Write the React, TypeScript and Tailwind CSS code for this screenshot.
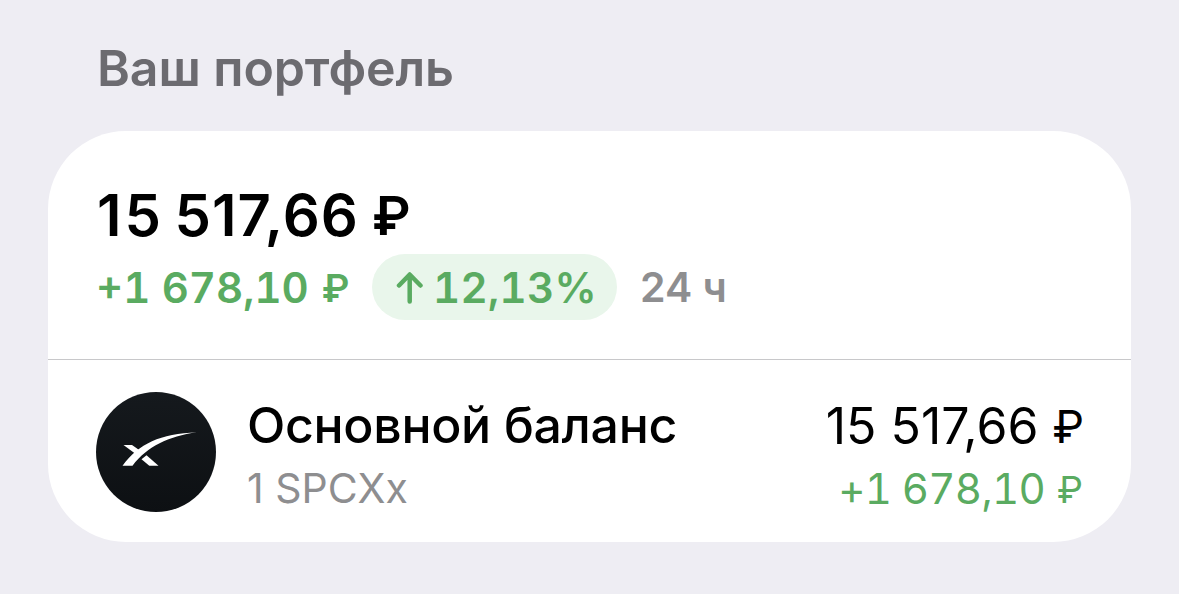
export default function App() {
  return (
    <div className="h-[594px] w-[1179px] overflow-hidden bg-[#eeedf3] px-12 font-['Inter','Liberation_Sans',sans-serif]">
      <h1 className="flex h-[131px] items-center pt-1 pl-[49px] text-[50px] leading-none font-semibold tracking-[-0.1px] text-[#6c6b70]">
        Ваш портфель
      </h1>

      <section className="h-[411px] w-[1083px] overflow-hidden rounded-[78px] bg-white">
        <div className="h-[229px] border-b border-[#c8c8ca] px-12 pt-[54px]">
          <div className="h-[69px] pl-px text-[58px] leading-[60px] font-semibold tracking-[1px] whitespace-nowrap text-black [word-spacing:-3px]">
            <span className="tracking-[3px]">1</span>5 517,66<span className="ml-[13px] align-[1px] text-[53px] leading-none">₽</span>
          </div>
          <div className="flex h-[66px] items-center pt-px text-[42px] leading-none font-semibold whitespace-nowrap">
            <span className="w-[276px] text-[#5aab61] tabular-nums">
              +1 678,10<span className="ml-[13px] align-[1px] text-[38px] leading-none">₽</span>
            </span>
            <span className="mb-px flex h-[66px] w-[245px] items-center rounded-full bg-[#e9f6eb] pt-px pl-6 text-[#5aab61] tabular-nums">
              <svg className="mr-[7px] h-[36px] w-[30px]" viewBox="0 0 30 36" fill="none" stroke="currentColor" strokeWidth="4.5" strokeLinecap="round" strokeLinejoin="round">
                <path d="M13.7 31.5V5M3 15.5L13.7 4.5L24.5 15.5" />
              </svg>
              <span className="tracking-[0.3px]">12,13%</span>
            </span>
            <span className="ml-[23px] text-[41px] text-[#8e8e90]">24 ч</span>
          </div>
        </div>

        <div className="flex h-[182px] items-center px-12 pt-0.5">
          <svg className="h-[120px] w-[120px] shrink-0" viewBox="0 0 120 120">
            <defs>
              <linearGradient id="disc" x1="0" y1="0" x2="0" y2="1">
                <stop offset="0" stopColor="#15191d" />
                <stop offset="1" stopColor="#0d1013" />
              </linearGradient>
            </defs>
            <circle cx="60" cy="60" r="60" fill="url(#disc)" />
            <g fill="#fff">
              <path d="M27.5 53H36L43.5 58.2L39 61.5Z" />
              <path d="M50.5 63.3L62.5 73.7H53.3L45.5 67.2Z" />
              <path d="M26.5 73.7C43 51.5 64 42 101 40.3C72 44.5 52 54 36.5 73.7Z" />
            </g>
          </svg>
          <div className="ml-[31px] flex-1 pt-2.5">
            <div className="text-[50px] leading-[60px] font-medium tracking-[-0.3px]">Основной баланс</div>
            <div className="pt-0.5 text-[41px] leading-[62px] text-[#8e8e90]">1 SPCXx</div>
          </div>
          <div className="pt-2.5 text-right whitespace-nowrap">
            <div className="pt-px pb-[3px] text-[50px] leading-[60px]">
              15 517,66<span className="-mr-px ml-[14px] align-[1px] text-[45px] leading-none">₽</span>
            </div>
            <div className="text-[42px] leading-[60px] text-[#5aab61] tabular-nums">
              <span className="tracking-[-0.7px]">+1 678,10</span>
              <span className="ml-[12px] align-[1px] text-[37px] leading-none">₽</span>
            </div>
          </div>
        </div>
      </section>
    </div>
  );
}
